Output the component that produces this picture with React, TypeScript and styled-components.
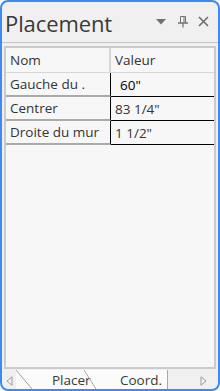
import React from "react";
import styled, { createGlobalStyle } from "styled-components";

const Global = createGlobalStyle`
  html, body { margin: 0; padding: 0; background: #ffffff; }
  body { width: 220px; height: 391px; overflow: hidden; font-family: "Open Sans", "Noto Sans", sans-serif; }
  * { box-sizing: border-box; }
`;

const Window = styled.div`
  width: 220px;
  height: 391px;
  border: 2px solid #3d8af5;
  border-radius: 8px;
  background: #f0f0f0;
  display: flex;
  flex-direction: column;
  overflow: hidden;
`;

const TitleBar = styled.div`
  height: 41px;
  flex: none;
  display: flex;
  align-items: center;
  padding: 0 6px 1px 3px;
  border-bottom: 1px solid #c4c4c4;
`;

const Title = styled.div`
  flex: 1;
  font-size: 22px;
  color: #3a3a3a;
  letter-spacing: -0.1px;
  line-height: 1;
  padding-top: 2px;
`;

const Icons = styled.div`
  display: flex;
  align-items: center;
`;

const IconSlot = styled.div<{ $w: number }>`
  width: ${(p) => p.$w}px;
  height: 20px;
  display: flex;
  align-items: center;
  justify-content: center;
`;

const Body = styled.div`
  flex: 1;
  display: flex;
  flex-direction: column;
  padding: 3px 2px 0 2px;
`;

const Panel = styled.div`
  flex: 1;
  border: 2px solid #cbcbcb;
  background: #f7f7f7;
  display: flex;
  flex-direction: column;
`;

const Row = styled.div<{ $header?: boolean }>`
  display: grid;
  grid-template-columns: 105px 1fr;
  height: ${(p) => (p.$header ? 25 : 24)}px;
`;

const NameCell = styled.div<{ $header?: boolean }>`
  display: flex;
  align-items: center;
  padding-left: 4px;
  font-size: 13.5px;
  color: #333;
  white-space: nowrap;
  overflow: hidden;
  border-bottom: ${(p) => (p.$header ? "1px solid #d6d6d6" : "2px solid #a9a9a9")};
  border-right: ${(p) => (p.$header ? "2px solid #d6d6d6" : "1px solid #000")};
  background: #f7f7f7;
`;

const ValueCell = styled.div<{ $header?: boolean; $edit?: boolean }>`
  display: flex;
  align-items: center;
  padding-left: ${(p) => (p.$edit ? 9 : 4)}px;
  font-size: 13.5px;
  color: ${(p) => (p.$edit ? "#000" : "#333")};
  white-space: nowrap;
  border-bottom: ${(p) => (p.$header ? "1px solid #d6d6d6" : "1px solid #000")};
  background: #f7f7f7;
`;

const TabBar = styled.div`
  height: 19px;
  flex: none;
  display: flex;
  align-items: stretch;
  margin-top: 1px;
`;

const ArrowBox = styled.div<{ $w: number }>`
  width: ${(p) => p.$w}px;
  display: flex;
  align-items: center;
  justify-content: center;
  padding-top: 2px;
`;

const TabStrip = styled.div`
  width: 152px;
  display: flex;
  background: #fbfbfb;
  border-right: 1px solid #a8a8a8;
`;

const Slant = styled.div<{ $w: number }>`
  width: ${(p) => p.$w}px;
  flex: none;
  background: linear-gradient(
    to top right,
    transparent calc(50% - 0.7px),
    #9a9a9a 50%,
    transparent calc(50% + 0.7px)
  );
`;

const Tab = styled.div<{ $w: number; $pad: number }>`
  width: ${(p) => p.$w}px;
  flex: none;
  display: flex;
  align-items: center;
  padding-left: ${(p) => p.$pad}px;
  font-size: 13.5px;
  color: #3a3a3a;
  white-space: nowrap;
  padding-top: 1px;
`;

const rows = [
  { name: "Gauche du .", value: "60\"", edit: true },
  { name: "Centrer", value: "83 1/4\"" },
  { name: "Droite du mur", value: "1 1/2\"" },
];

export default function App() {
  return (
    <>
      <Global />
      <Window>
        <TitleBar>
          <Title>Placement</Title>
          <Icons>
            <IconSlot $w={23}>
              <svg width="10" height="6" viewBox="0 0 10 6">
                <path d="M0 0 H10 L5 5.5 Z" fill="#707070" />
              </svg>
            </IconSlot>
            <IconSlot $w={22}>
              <svg width="12" height="12" viewBox="0 0 12 12">
                <path d="M3.5 0.5 H8.5 V6.5 M3.5 0.5 V6.5 M7 0.5 V6.5" stroke="#707070" strokeWidth="1" fill="none" />
                <path d="M1 7 H11" stroke="#707070" strokeWidth="1.4" />
                <path d="M6 7 V11.5" stroke="#707070" strokeWidth="1.2" />
              </svg>
            </IconSlot>
            <IconSlot $w={18}>
              <svg width="11" height="11" viewBox="0 0 11 11">
                <path d="M1 1 L10 10 M10 1 L1 10" stroke="#6a6a6a" strokeWidth="1.5" />
              </svg>
            </IconSlot>
          </Icons>
        </TitleBar>
        <Body>
          <Panel>
            <Row $header>
              <NameCell $header>Nom</NameCell>
              <ValueCell $header>Valeur</ValueCell>
            </Row>
            {rows.map((r) => (
              <Row key={r.name}>
                <NameCell>{r.name}</NameCell>
                <ValueCell $edit={r.edit}>{r.value}</ValueCell>
              </Row>
            ))}
          </Panel>
        </Body>
        <TabBar>
          <ArrowBox $w={14}>
            <svg width="7" height="10" viewBox="0 0 7 10">
              <path d="M6 0.8 V9.2 L1 5 Z" fill="#f4f4f4" stroke="#9a9a9a" strokeWidth="1" />
            </svg>
          </ArrowBox>
          <TabStrip>
            <Slant $w={16} />
            <Tab $w={52} $pad={20}>Placer</Tab>
            <Slant $w={12} />
            <Tab $w={72} $pad={24}>Coord.</Tab>
          </TabStrip>
          <ArrowBox $w={50}>
            <svg width="7" height="10" viewBox="0 0 7 10" style={{ marginLeft: 20 }}>
              <path d="M1 0.8 V9.2 L6 5 Z" fill="#f4f4f4" stroke="#9a9a9a" strokeWidth="1" />
            </svg>
          </ArrowBox>
        </TabBar>
      </Window>
    </>
  );
}
